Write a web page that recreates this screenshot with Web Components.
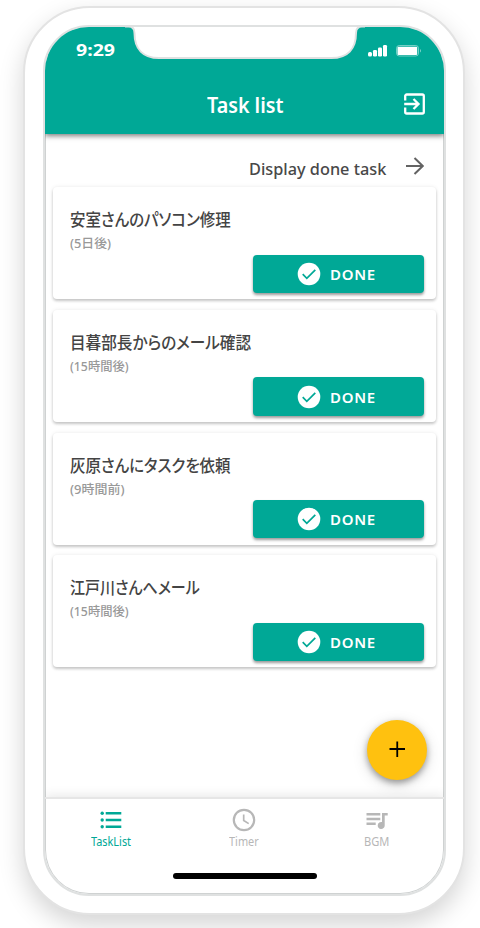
<!DOCTYPE html>
<html lang="ja"><head><meta charset="utf-8"><title>Task list</title>
<style>html,body{margin:0;width:480px;height:928px;overflow:hidden;background:#fff}body{font-family:"Noto Sans","Noto Sans CJK JP",sans-serif}</style></head>
<body>
<phone-frame>
  <status-bar slot="status"></status-bar>
  <app-header><fit-text w="76">Task list</fit-text></app-header>
  <main-view>
    <done-link><fit-text w="137">Display done task</fit-text></done-link>
    <task-card><fit-text w="161">安室さんのパソコン修理</fit-text><fit-text slot="due" w="41">(5日後)</fit-text></task-card>
    <task-card><fit-text w="181">目暮部長からのメール確認</fit-text><fit-text slot="due" w="59">(15時間後)</fit-text></task-card>
    <task-card><fit-text w="161">灰原さんにタスクを依頼</fit-text><fit-text slot="due" w="54">(9時間前)</fit-text></task-card>
    <task-card><fit-text w="130">江戸川さんへメール</fit-text><fit-text slot="due" w="59">(15時間後)</fit-text></task-card>
  </main-view>
  <fab-button></fab-button>
  <tab-bar>
    <tab-item class="on"><svg slot="icon" width="24" height="24" viewBox="0 0 24 24" fill="currentColor"><circle cx="3.2" cy="5.3" r="1.7"/><circle cx="3.2" cy="12" r="1.7"/><circle cx="3.2" cy="18.7" r="1.7"/><path d="M6.700 4.100h15.600v2.400H6.700zM6.700 10.800h15.600v2.400H6.700zM6.700 17.500h15.600v2.400H6.700z"/></svg><fit-text w="40">TaskList</fit-text></tab-item>
    <tab-item><svg slot="icon" width="24" height="24" viewBox="0 0 24 24" fill="none" stroke="currentColor"><circle cx="12" cy="12" r="10.200" stroke-width="2.200"/><path d="M11.700 6.500v6l5 3.100" stroke-width="1.700"/></svg><fit-text w="30">Timer</fit-text></tab-item>
    <tab-item><svg slot="icon" width="24" height="24" viewBox="0 0 24 24" fill="currentColor"><path d="M1.500 5h13.800v2.500H1.500zM1.500 9.800h13.800v2.500H1.500zM1.500 14.600h9.200v2.500H1.500zM17 5h5.700v2.500h-3V17.500a3.500 3.500 0 1 1-2.700-3.400z"/></svg><fit-text w="25">BGM</fit-text></tab-item>
  </tab-bar>
</phone-frame>
<script>
const make=(name,html,ready)=>customElements.define(name,class extends HTMLElement{
  constructor(){super();this.attachShadow({mode:'open'}).innerHTML=html}
  connectedCallback(){if(ready)ready(this)}
});

make('phone-frame',`<style>
:host{display:block;box-sizing:border-box;width:442px;height:909px;margin:6px 0 0 23px;border:2px solid #e3e3e3;border-radius:67px;background:#fff;padding:17px 17px 17px 18px;box-shadow:0 10px 24px rgba(0,0,0,.17)}
.screen{box-sizing:border-box;position:relative;width:403px;height:871px;border:2px solid #dfe1e1;border-radius:46px;overflow:hidden;display:flex;flex-direction:column;background:#fff;box-shadow:inset 0 0 0 1px #cfd2d2}
.top{background:#00a896;height:50px;flex:none}
.notch{position:absolute;left:80px;top:-2px;z-index:3}
</style><div class="screen"><div class="top"><slot name="status"></slot></div><slot></slot>
<svg class="notch" width="240" height="36" viewBox="0 0 240 36"><path d="M0 0V1.500H3.500C8 1.500 9.500 4 9.500 8C9.500 24 18 33 34 33H206.500C222.500 33 231 24 231 8C231 4 232.500 1.500 237 1.500H240V0z" fill="#fff" stroke="#dfe1e1" stroke-width="2"/></svg></div>`);

make('fit-text',`<style>:host{display:inline-block;white-space:nowrap;text-align:left}span{display:inline-block;transform-origin:0 50%}</style><span><slot></slot></span>`,el=>{
  const w=+el.getAttribute('w'),s=el.shadowRoot.querySelector('span');
  el.style.width=w+'px';
  requestAnimationFrame(()=>{s.style.transform='scaleX('+w/s.offsetWidth+')'});
});

make('status-bar',`<style>:host{display:flex;justify-content:space-between;align-items:center;padding:12px 22px 0 31px;height:22px;color:#fff;font:bold 16.500px "Noto Sans",sans-serif}svg{display:block;margin-top:1px}fit-text{margin-top:-1px}</style>
<fit-text w="39">9:29</fit-text><svg width="54" height="14" viewBox="0 0 54 14" fill="#fff"><rect x="0" y="8" width="4" height="4.500" rx="1.500"/><rect x="5" y="6" width="4" height="6.500" rx="1.300"/><rect x="10" y="3.500" width="4" height="9" rx="1.200"/><rect x="15" y="1" width="4" height="11.500" rx="1.200"/><rect x="28.500" y="1.500" width="22" height="10.500" rx="2.800" fill="none" stroke="#fff" stroke-opacity=".45"/><rect x="29.500" y="2.700" width="19.700" height="8.200" rx="1"/><path d="M52 5c1.300.8 1.300 2.700 0 3.500z" opacity=".5"/></svg>`);

make('app-header',`<style>:host{display:grid;grid-template-columns:1fr auto 1fr;align-items:center;height:57px;flex:none;background:#00a896;color:#fff;font-size:21px;line-height:28px;font-weight:600;box-shadow:0 2px 5px rgba(0,0,0,.5);clip-path:inset(0 0 -10px 0);z-index:1}slot{display:block}.t{grid-column:2;margin-top:-2px}svg{justify-self:end;margin:-3px 18px 0 0}</style>
<div class="t"><slot></slot></div><svg width="24" height="24" viewBox="0 0 24 24" fill="none" stroke="#fff" stroke-width="2.300"><path d="M3.200 8.500V4a1.500 1.500 0 0 1 1.500-1.500h15.600A1.500 1.500 0 0 1 21.800 4v16a1.500 1.500 0 0 1-1.500 1.500H4.700A1.500 1.500 0 0 1 3.200 20v-4.500M2.200 12h13.500M11.500 7l5 5-5 5"/></svg>`);

make('main-view',`<style>:host{display:flex;flex-direction:column;gap:10.700px;padding:0 8px;height:663px;flex:none;box-sizing:border-box}</style><slot></slot>`);

make('done-link',`<style>:host{display:flex;justify-content:flex-end;align-items:flex-end;height:53.400px;margin-bottom:-10.700px;box-sizing:border-box;padding:0 10px 6px 0;gap:18px;color:#484848;font-size:17px;font-weight:500;line-height:24px}svg{margin-bottom:4px;color:#636363}</style><slot></slot><svg width="22" height="22" viewBox="0 0 22 22" fill="none" stroke="currentColor" stroke-width="2"><path d="M2 11h17M10.500 3l8.300 8-8.300 8"/></svg>`);

make('task-card',`<style>:host{display:flex;flex-direction:column;box-sizing:border-box;width:383px;height:112px;flex:none;padding:20px 12px 0 17px;border-radius:4px;background:#fff;box-shadow:0 2px 3px rgba(0,0,0,.2),0 0 4px rgba(0,0,0,.08)}
.name{font:500 17px/24px "Noto Sans CJK JP",sans-serif;font-feature-settings:"palt";color:#444;height:24px}.due{font:500 12.500px/18px "Noto Sans","Noto Sans CJK JP",sans-serif;color:#999;height:18px;margin-top:4px}
done-button{align-self:flex-end;margin-top:1.200px}</style><div class="name"><slot></slot></div><div class="due"><slot name="due"></slot></div><done-button></done-button>`);

make('done-button',`<style>:host{display:flex;justify-content:center;align-items:center;gap:9px;box-sizing:border-box;width:171px;height:38.500px;padding-right:4px;border-radius:4px;background:#00a896;color:#fff;font:600 15px "Noto Sans",sans-serif;letter-spacing:.7px;box-shadow:0 2px 3px rgba(0,0,0,.4)}</style><svg width="24" height="24" viewBox="0 0 24 24"><circle cx="12" cy="12" r="11.300" fill="#fff"/><path d="M5.700 12.200l4.100 4.100 8.500-8.500" fill="none" stroke="#00a896" stroke-width="1.700"/></svg><fit-text w="46">DONE</fit-text>`);

make('fab-button',`<style>:host{position:absolute;left:322px;top:693px;width:60px;height:60px;border-radius:50%;background:#ffc10f;display:grid;place-items:center;box-shadow:0 3px 6px rgba(0,0,0,.35),0 4px 16px rgba(0,0,0,.14);z-index:2}svg{margin-top:-2px}</style><svg width="18" height="18" viewBox="0 0 18 18"><path d="M1.500 9h15.500M9.250 1.500v15.500" stroke="#000" stroke-width="1.800"/></svg>`);

make('tab-bar',`<style>:host{position:relative;display:grid;grid-template-columns:repeat(3,1fr);align-items:start;flex:1;border-top:2px solid #e6e6e6;box-shadow:0 -2px 10px rgba(0,0,0,.09);padding:9px 1px 0 0;box-sizing:border-box}i{position:absolute;left:128px;top:74px;width:143.500px;height:5.500px;border-radius:3px;background:#000}</style><slot></slot><i></i>`);
make('tab-item',`<style>:host{display:flex;flex-direction:column;align-items:center;color:#b7b7b7;font-size:12px;line-height:16px;gap:2px}:host(.on){color:#00a896}</style><slot name="icon"></slot><slot></slot>`);
</script>
</body></html>
